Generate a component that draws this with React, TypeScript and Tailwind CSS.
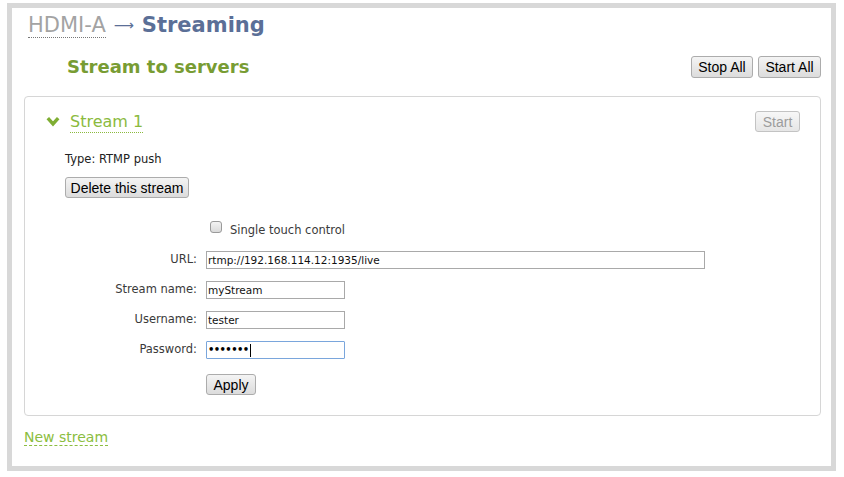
import React from 'react';
import clsx from 'clsx';

const verdana = "font-['DejaVu_Sans',Verdana,sans-serif]";

const Btn = ({ children, className, disabled }: { children: React.ReactNode; className?: string; disabled?: boolean }) => (
    <button
        disabled={disabled}
        className={clsx(
            "h-[21px] rounded-[3px] border text-[14px] leading-none font-['Liberation_Sans',Arial,sans-serif] bg-linear-to-b flex items-center justify-center",
            disabled
                ? "border-[#c3c3c3] from-[#f7f7f7] to-[#e6e6e6] text-[#9c9c9c]"
                : "border-[#acacac] from-[#f4f4f4] to-[#dcdcdc] text-black",
            className
        )}
    >
        {children}
    </button>
);

const Field = ({ label, value, width, focused }: { label: string; value?: string; width: string; focused?: boolean }) => (
    <div className="flex items-center h-[18px]">
        <div className="w-[132px] text-right text-[11.5px] text-[#3a3a3a]">{label}</div>
        <div
            className={clsx(
                "ml-[9px] h-[18px] border flex items-center px-[1px] bg-white",
                width,
                focused ? "border-[#7aa6dc] rounded-[1px]" : "border-[#a9a9a9]"
            )}
        >
            {focused ? (
                <>
                    <span className="text-[10px] font-bold leading-none text-black tracking-[-0.6px]">•••••••</span>
                    <span className="w-px h-[13px] bg-black ml-[1px]" />
                </>
            ) : (
                <span className="text-[10.5px] leading-none text-[#111]">{value}</span>
            )}
        </div>
    </div>
);

const Chevron = () => (
    <svg width="14" height="11" viewBox="0 0 14 11" className="shrink-0">
        <polyline points="1.8,2.2 7,8 12.2,2.2" fill="none" stroke="#7fae33" strokeWidth="3.4" strokeLinejoin="miter" />
    </svg>
);

export default function App() {
    return (
        <div className={clsx("bg-white w-[844px] h-[477px] pt-[3px] pl-[7px]", verdana)}>
            <div className="w-[829px] h-[468px] border-[5px] border-[#d8d8d8] pl-[12px] pr-[10px] pt-[4px]">
                <div className="ml-[4px] h-[26px] leading-[26px] text-[21px] flex items-baseline">
                    <span className="text-[#a3a3a3] border-b border-dotted border-[#777] leading-[23px]">HDMI-A</span>
                    <span className="text-[#5b6f97] ml-[8px] text-[14px] relative -top-[2px]">⟶</span>
                    <span className="text-[#5b6f97] font-bold ml-[8px]">Streaming</span>
                </div>

                <div className="mt-[18px] h-[22px] flex items-center justify-between">
                    <h2 className="ml-[43px] text-[18px] leading-[22px] font-bold text-[#789c33]">Stream to servers</h2>
                    <div className="flex gap-[5px]">
                        <Btn className="w-[62px] h-[22px]">Stop All</Btn>
                        <Btn className="w-[63px] h-[22px]">Start All</Btn>
                    </div>
                </div>

                <div className="mt-[18px] h-[320px] border border-[#d6d6d6] rounded-[4px] pl-[21px] pr-[20px] pt-[14px]">
                    <div className="h-[21px] flex items-center justify-between">
                        <div className="flex items-center">
                            <Chevron />
                            <span className="ml-[10px] mt-[1px] text-[16px] leading-[20px] text-[#8bba3e] border-b border-dotted border-[#8bba3e]">Stream 1</span>
                        </div>
                        <Btn disabled className="w-[45px]">Start</Btn>
                    </div>

                    <div className="ml-[19px]">
                        <p className="mt-[20px] text-[11.5px] leading-[14px] text-[#222]">Type: RTMP push</p>
                        <Btn className="mt-[11px] w-[124px]">Delete this stream</Btn>

                        <div className="mt-[23px] ml-[145px] flex items-start">
                            <span className="w-[12px] h-[12px] rounded-[3px] border border-[#9a9a9a] bg-linear-to-b from-[#f3f3f3] to-[#dadada]" />
                            <span className="ml-[8px] mt-[2px] text-[11.5px] leading-[14px] text-[#3a3a3a]">Single touch control</span>
                        </div>

                        <div className="mt-[14px] flex flex-col gap-[12px]">
                            <Field label="URL:" value="rtmp://192.168.114.12:1935/live" width="w-[499px]" />
                            <Field label="Stream name:" value="myStream" width="w-[139px]" />
                            <Field label="Username:" value="tester" width="w-[139px]" />
                            <Field label="Password:" width="w-[139px]" focused />
                        </div>

                        <Btn className="mt-[15px] ml-[141px] w-[50px]">Apply</Btn>
                    </div>
                </div>

                <div className="mt-[12px] leading-[17px]">
                    <span className="text-[14px] text-[#8bbd40] border-b border-dashed border-[#8bbd40]">New stream</span>
                </div>
            </div>
        </div>
    );
}
